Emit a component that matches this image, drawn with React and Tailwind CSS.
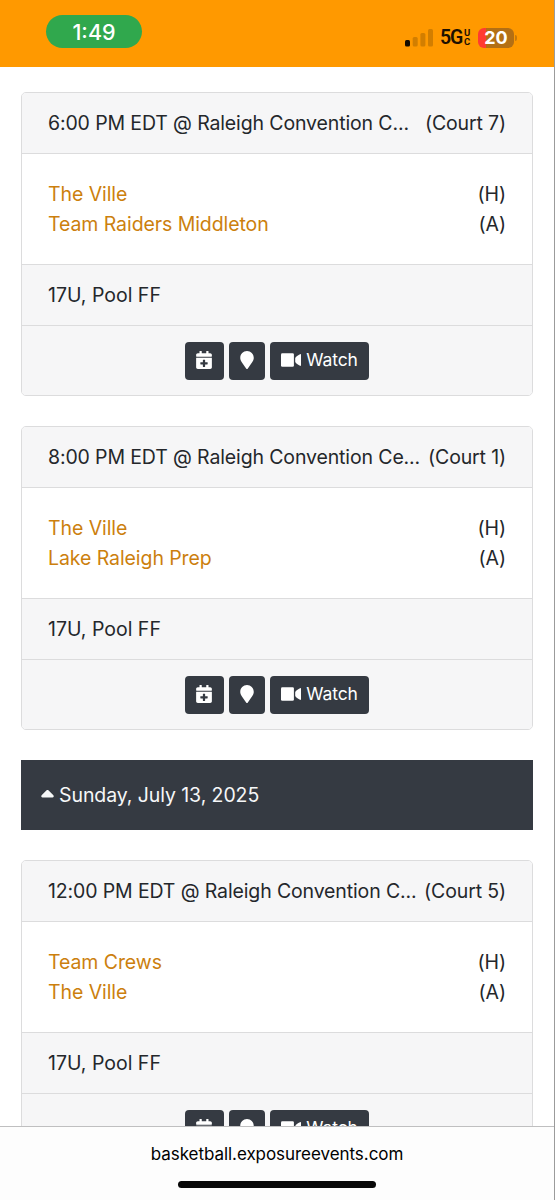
import React from 'react';
import { FaCalendarPlus, FaMapMarker } from 'react-icons/fa';
import { FaCaretUp } from 'react-icons/fa6';

const days = [
  {
    date: null,
    games: [
      {
        id: 1,
        time: '6:00 PM EDT @ Raleigh Convention C...',
        court: '(Court 7)',
        home: 'The Ville',
        away: 'Team Raiders Middleton',
        pool: '17U, Pool FF',
      },
      {
        id: 2,
        time: '8:00 PM EDT @ Raleigh Convention Ce...',
        court: '(Court 1)',
        home: 'The Ville',
        away: 'Lake Raleigh Prep',
        pool: '17U, Pool FF',
      },
    ],
  },
  {
    date: 'Sunday, July 13, 2025',
    games: [
      {
        id: 3,
        time: '12:00 PM EDT @ Raleigh Convention C...',
        court: '(Court 5)',
        home: 'Team Crews',
        away: 'The Ville',
        pool: '17U, Pool FF',
      },
    ],
  },
];

const VideoIcon = () => (
  <svg width="20" height="14" viewBox="0 0 20 14" fill="currentColor">
    <rect x="0" y="0.2" width="12.9" height="13.6" rx="1.3" />
    <path d="M14.2 5.2C14.4 4 16.6 2.2 19 1.2C19.6 0.9 20 1.2 20 1.7V12.3C20 12.8 19.6 13.1 19 12.8C16.6 11.8 14.4 10 14.2 8.8Z" />
  </svg>
);

const StatusBar = () => (
  <header className="h-[67px] shrink-0 bg-[#ff9900] flex items-start justify-between pl-[46px] pr-[37px]">
    <div className="mt-[15px] w-[96px] h-[33px] pt-px rounded-full bg-[#30a84d] text-white text-[21.5px] font-medium flex items-center justify-center">
      1:49
    </div>
    <div className="mt-[27px] flex items-center">
      {/* Cell signal, one bar */}
      <svg width="28" height="20" viewBox="0 0 28 20" className="mr-[7px]">
        <rect x="0" y="12" width="5" height="6.5" rx="1.5" fill="#130b00" />
        <rect x="7.7" y="9" width="5" height="9.5" rx="1.5" fill="#d27e00" />
        <rect x="15.4" y="5" width="5" height="13.5" rx="1.5" fill="#d27e00" />
        <rect x="23" y="1" width="5" height="17.5" rx="1.5" fill="#d27e00" />
      </svg>
      <span className="w-[23px] pt-px font-['Roboto','Liberation_Sans',sans-serif] text-[19.5px] leading-[20px] font-semibold text-[#1c1000] tracking-[-1.1px]">
        5G
      </span>
      <span className="ml-px flex flex-col w-[7px] font-['Roboto','Liberation_Sans',sans-serif] text-[9.5px] leading-[8.5px] font-bold text-[#1c1000]">
        <span>U</span>
        <span>C</span>
      </span>
      <div className="ml-[7px] w-[36px] h-[20px] rounded-[6px] bg-linear-to-r from-[#ff3b30] from-[22%] to-[#b36f14] to-[22%] text-white text-[18px] font-bold flex items-center justify-center">
        20
      </div>
      <div className="ml-px w-[2px] h-[6px] rounded-r-full bg-[#c87a0a]" />
    </div>
  </header>
);

const GameCard = ({ game }) => (
  <div className="h-[304px] shrink-0 border border-[#dcdcdd] rounded-[5px] overflow-hidden bg-white">
    <div className="h-[61px] pt-[2px] px-[26px] flex items-center justify-between border-b border-[#dcdcdd] bg-[#f6f6f7] whitespace-nowrap tracking-[-0.13px]">
      <span>{game.time}</span>
      <span>{game.court}</span>
    </div>

    <div className="h-[111px] px-[26px] flex flex-col justify-center border-b border-[#dcdcdd] leading-[30px] tracking-[-0.08px]">
      <div className="flex justify-between">
        <a className="text-[#cc7f0e]">{game.home}</a>
        <span>(H)</span>
      </div>
      <div className="flex justify-between">
        <a className="text-[#cc7f0e]">{game.away}</a>
        <span>(A)</span>
      </div>
    </div>

    <div className="h-[61px] pt-[2px] px-[26px] flex items-center border-b border-[#dcdcdd] bg-[#f6f6f7]">
      {game.pool}
    </div>

    {/* Actions */}
    <div className="h-[69px] pt-px flex items-center justify-center gap-[5px] bg-[#f6f6f7] text-white text-[17.5px]">
      <button className="w-[39px] h-[38px] pb-[2px] pr-px rounded-[4px] bg-[#353a42] flex items-center justify-center">
        <FaCalendarPlus className="w-[16px] h-[18px]" />
      </button>
      <button className="w-[36px] h-[38px] pb-[2px] rounded-[4px] bg-[#353a42] flex items-center justify-center">
        <FaMapMarker className="w-[14px] h-[18px]" />
      </button>
      <button className="w-[99px] h-[38px] pb-[2px] rounded-[4px] bg-[#353a42] flex items-center justify-center gap-[5px]">
        <VideoIcon />
        <span className="pt-px tracking-[-0.1px]">Watch</span>
      </button>
    </div>
  </div>
);

const DayHeader = ({ date }) => (
  <div className="h-[70px] shrink-0 pl-[20px] flex items-center gap-[5px] bg-[#353a42] text-[#f6f7f8] tracking-[-0.08px]">
    <FaCaretUp className="w-[13px] h-[20px]" />
    <span className="pt-px">{date}</span>
  </div>
);

const BrowserBar = () => (
  <footer className="h-[74px] shrink-0 border-t border-[#bfbfc0] bg-[#fdfdfd] flex flex-col items-center text-black">
    <span className="mt-[14px] text-[17px] leading-[26px] tracking-[-0.05px]">basketball.exposureevents.com</span>
    <div className="mt-[14px] w-[198px] h-[7px] rounded-full bg-[#080808]" />
  </footer>
);

const App = () => (
  <div className="w-[555px] h-[1200px] flex flex-col overflow-hidden bg-white border-r border-[#9b9b9b] font-['Inter','Liberation_Sans',sans-serif] text-[19.5px] text-[#24272b]">
    <StatusBar />
    <main className="h-[1059px] pt-[25px] pl-[21px] pr-[21px] flex flex-col gap-[30px] overflow-hidden">
      {days.map((day, i) => (
        <React.Fragment key={i}>
          {day.date && <DayHeader date={day.date} />}
          {day.games.map((game) => (
            <GameCard key={game.id} game={game} />
          ))}
        </React.Fragment>
      ))}
    </main>
    <BrowserBar />
  </div>
);

export default App;
